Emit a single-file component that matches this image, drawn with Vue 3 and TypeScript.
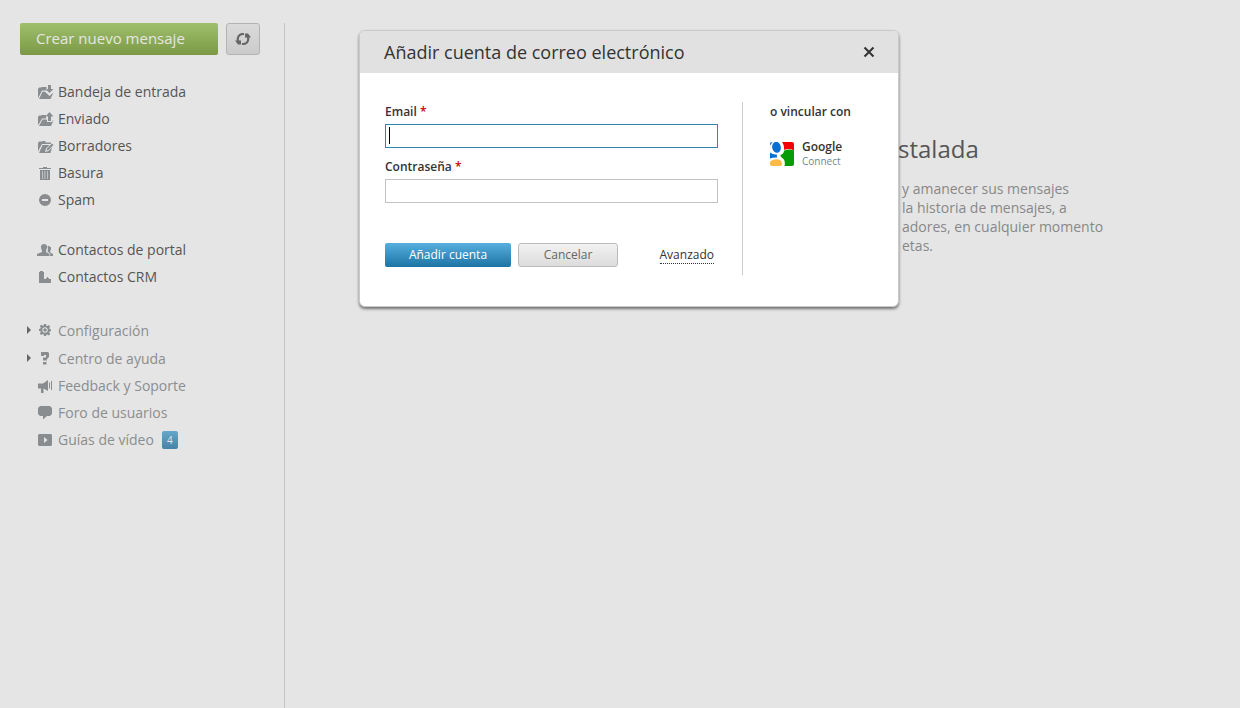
<script setup lang="ts">
import { ref } from 'vue'

interface NavItem {
  label: string
  icon: string
  expandable?: boolean
  badge?: number
}

const folders: NavItem[] = [
  { label: 'Bandeja de entrada', icon: 'inbox' },
  { label: 'Enviado', icon: 'sent' },
  { label: 'Borradores', icon: 'drafts' },
  { label: 'Basura', icon: 'trash' },
  { label: 'Spam', icon: 'spam' },
]
const contacts: NavItem[] = [
  { label: 'Contactos de portal', icon: 'people' },
  { label: 'Contactos CRM', icon: 'crm' },
]
const support: NavItem[] = [
  { label: 'Configuración', icon: 'gear', expandable: true },
  { label: 'Centro de ayuda', icon: 'help', expandable: true },
  { label: 'Feedback y Soporte', icon: 'feedback' },
  { label: 'Foro de usuarios', icon: 'forum' },
  { label: 'Guías de vídeo', icon: 'video', badge: 4 },
]
const groups = [
  { id: 'folders', name: 'Carpetas', items: folders },
  { id: 'contacts', name: 'Contactos', items: contacts },
  { id: 'support', name: 'Ayuda', items: support },
]

const icons: Record<string, string> = {
  inbox: 'M0 4L1 2.500h2L4 2h4.500v3.500H4L1.500 10.500 0 13zM10 0h3v4h2.500L11.500 8 7.500 4H10zM1 14L4.500 6.800H7L11.500 11 15.500 7.500 12.500 14z',
  sent: 'M0 5L1 3.500h2L4 3h4v3.500H4L1.500 11 0 13zM10 9V4.500H7.500l4-4.500 4 4.500H13V9zM1 14l3.500-6.500H9V10h5.500V8.500h1L13 14z',
  drafts: 'M0 4L1 2.500h3L5 2h2l1 1.500h5V5H4L1.500 9.500 0 12.500zM1 14l3.500-8h7L8 9.500 7 13l3.500-1L14 8.500 12.500 14zM8.500 11.500l.5-2L14 4.500 15.500 6 10.500 11z',
  trash: 'M5 1h4v1h4v1H1V2h4zM2 4h10v10H2zM4 5v8h.6V5zm2.600 0v8h.6V5zM9.200 5v8h.6V5z',
  spam: 'M7 1a6 6 0 1 0 0 12A6 6 0 0 0 7 1zM4 6h6v2H4z',
  people: 'M3 3Q3.500 1 6 1t3 2q.3 2-.7 3.500L8 8v1l3.500 2v2H-1v-2L4 9V8L3.500 6.500Q2.700 5 3 3zM9.500 3q2.500-.5 3.500 1.500.3 2-.8 3.500v1.500L15 11v2h-2.800v-2.300L9.500 8.500q1-2 0-5.500z',
  crm: 'M1 2h1V1h3v1h1v7h2V8h1V7h1v1h1v1h2v4H1z',
  gear: 'M6 1h2l.4 1.700 1 .4 1.500-1L12.200 3.400l-1 1.600.4 1 1.400.5v1.600l-1.400.5-.4 1 1 1.500-1.300 1.300-1.500-1-1 .4L8 13H6l-.4-1.700-1-.4-1.500 1-1.300-1.300 1-1.500-.4-1L1 8V6l1.400-.4.4-1-1-1.500 1.300-1.300 1.500 1 1-.4zM7 4.300a2.700 2.700 0 1 0 0 5.400 2.700 2.700 0 0 0 0-5.400zM7 5.200a1.800 1.800 0 1 1 0 3.600 1.800 1.800 0 0 1 0-3.600z',
  help: 'M3 1h7l1 1v4L9 8v1.500H5V6.500h3V4H6v1H3zM5 11h3.500v2.500H5z',
  feedback: 'M0 4.500h5L10 1v11L5.500 9.500V14H3V9.500H0zM11 3.500h1v6h-1zM13 2h1v9h-1z',
  forum: 'M2 0h10l2 2v6l-2 2H9l-4 3.500V10H2L0 8V2z',
  video: 'M1 1h12l1 1v10l-1 1H1l-1-1V2zM6 4v6l3.500-3z',
}

const dialogOpen = ref(true)
const email = ref('')
const password = ref('')
</script>

<template>
  <div class="app">
    <aside class="sidebar">
      <div class="actions">
        <button type="button" class="create">Crear nuevo mensaje</button>
        <button type="button" class="refresh" aria-label="Actualizar">
          <svg width="16" height="14" viewBox="0 0 16 14" aria-hidden="true">
            <path d="M4.500 10.800A5 5 0 0 1 8 2h1M11.500 3.200A5 5 0 0 1 8 12H7" />
            <path class="tip" d="M0 8.500h6V12.500H3zM16 5.500h-6V1.500h3z" />
          </svg>
        </button>
      </div>
      <nav v-for="group in groups" :key="group.id" :class="group.id" :aria-label="group.name">
        <a
          v-for="item in group.items"
          :key="item.label"
          href="#"
          class="item"
          :class="{ expandable: item.expandable }"
        >
          <svg class="icon" width="17" height="14" viewBox="-1 0 17 14" aria-hidden="true">
            <path fill-rule="evenodd" :d="icons[item.icon]" />
          </svg>
          <span>{{ item.label }}</span>
          <span v-if="item.badge" class="badge">{{ item.badge }}</span>
        </a>
      </nav>
    </aside>

    <main class="content">
      <h1>stalada</h1>
      <p>y amanecer sus mensajes<br />la historia de mensajes, a<br />adores, en cualquier momento<br />etas.</p>
    </main>

    <div v-if="dialogOpen" class="overlay">
      <section class="dialog" role="dialog" aria-labelledby="dialog-title">
        <header>
          <h2 id="dialog-title">Añadir cuenta de correo electrónico</h2>
          <button type="button" class="close" aria-label="Cerrar" @click="dialogOpen = false">
            <svg width="12" height="12" viewBox="0 0 12 12" aria-hidden="true">
              <path d="M1.500 1.500l9 9M10.500 1.500l-9 9" />
            </svg>
          </button>
        </header>
        <div class="body">
          <form @submit.prevent>
            <label for="email">Email <span class="required">*</span></label>
            <div class="field">
              <input id="email" v-model="email" type="text" class="active" />
              <span v-if="!email" class="caret"></span>
            </div>
            <label for="password">Contraseña <span class="required">*</span></label>
            <div class="field">
              <input id="password" v-model="password" type="password" />
            </div>
            <div class="buttons">
              <button type="submit" class="primary">Añadir cuenta</button>
              <button type="button" class="secondary" @click="dialogOpen = false">Cancelar</button>
              <a href="#" class="advanced">Avanzado</a>
            </div>
          </form>
          <div class="link-with">
            <h3>o vincular con</h3>
            <a href="#" class="google">
              <svg width="24" height="24" viewBox="0 0 24 24" aria-hidden="true">
                <defs><clipPath id="tile"><rect width="24" height="24" rx="2" /></clipPath></defs>
                <g clip-path="url(#tile)">
                  <rect width="24" height="24" fill="#fff" />
                  <path d="M12 0h12v8.500Q19 6 14 8q.5-5-2-8z" fill="#f30008" />
                  <path d="M14 8.800q5-2.500 10-.3V24H14.500q1-4.500-1-7-3.500-2.500-3-4Q14 11.500 14 8.800z" fill="#079b08" />
                  <ellipse cx="6.500" cy="5.300" rx="4.300" ry="5.500" transform="rotate(-12 6.500 5.300)" fill="#0b6fd0" />
                  <path d="M0 10.500q3 2.500 7 2-.5 1.700.2 3Q4 15 0 16.500z" fill="#0b6fd0" />
                  <path d="M0 0h2.500L0 3.500z" fill="#0b6fd0" />
                  <path d="M0 20q2-2.700 6.500-2.700T12 21q0 2-1 3H0z" fill="#fdbb45" />
                </g>
              </svg>
              <span class="google-text"><strong>Google</strong><span>Connect</span></span>
            </a>
          </div>
        </div>
      </section>
    </div>
  </div>
</template>

<style>
body {
  margin: 0;
  background: #e5e5e5;
}
</style>

<style scoped>
.app {
  display: flex;
  box-sizing: border-box;
  min-height: 100vh;
  padding-top: 23px;
  font-family: "Open Sans", sans-serif;
  font-size: 14px;
  color: #555;
}
button,
input {
  box-sizing: border-box;
  margin: 0;
  font-family: inherit;
}
h1,
h2,
h3,
p {
  margin: 0;
}
.sidebar {
  box-sizing: border-box;
  flex: 0 0 285px;
  padding: 0 24px 0 20px;
  border-right: 1px solid #c3c3c3;
}
.actions {
  display: flex;
  gap: 8px;
  margin-bottom: 23px;
}
.create {
  flex: 1;
  height: 32px;
  padding: 0 16px 2px;
  border: 0;
  border-radius: 2px;
  background: linear-gradient(#9fbf6c, #7b9945);
  color: #e5e5e5;
  font-size: 15px;
  text-align: left;
}
.refresh {
  display: flex;
  align-items: center;
  justify-content: center;
  width: 34px;
  height: 32px;
  padding: 0;
  border: 1px solid #b3b3b3;
  border-radius: 3px;
  background: linear-gradient(#dbdbdb, #cbcbcb);
}
.refresh path {
  fill: none;
  stroke: #666;
  stroke-width: 2;
}
.refresh .tip {
  fill: #666;
  stroke: none;
}
.item {
  display: flex;
  align-items: center;
  height: 27px;
  padding-left: 17px;
  color: #555;
  text-decoration: none;
}
.icon {
  margin-right: 4px;
  fill: #8a8d8f;
}
.contacts {
  margin-top: 23px;
}
.support {
  margin-top: 26px;
}
.support .item {
  color: #8b8d8f;
}
.support .expandable {
  height: 28px;
  padding-left: 7px;
}
.expandable::before {
  content: "";
  margin-right: 6px;
  border: 4px solid transparent;
  border-right: 0;
  border-left-color: #666;
}
.badge {
  width: 16px;
  height: 18px;
  margin-left: 8px;
  border-radius: 2px;
  background: linear-gradient(#64a6cd, #4684a6);
  color: #e5e5e5;
  font-size: 10px;
  line-height: 18px;
  text-align: center;
}
.content {
  flex: 1;
  padding: 108px 0 0 613px;
  white-space: nowrap;
}
h1 {
  font-size: 24px;
  font-weight: 400;
  line-height: 36px;
}
.content p {
  margin-top: 12px;
  padding-left: 4px;
  color: #888;
  line-height: 19px;
}
.overlay {
  position: absolute;
  top: 30px;
  right: 0;
  left: 18px;
  display: flex;
  justify-content: center;
}
.dialog {
  box-sizing: border-box;
  width: 540px;
  overflow: hidden;
  border: 1px solid #c9c9c9;
  border-radius: 6px;
  background: #fff;
  box-shadow: 0 2px 3px rgba(0, 0, 0, 0.5);
  color: #333;
}
.dialog header {
  display: flex;
  align-items: center;
  justify-content: space-between;
  height: 42px;
  padding: 0 23px 0 24px;
  background: #e1e1e1;
}
h2 {
  font-size: 18px;
  font-weight: 400;
}
.close {
  display: flex;
  padding: 0;
  border: 0;
  background: none;
}
.close path {
  fill: none;
  stroke: #333;
  stroke-width: 2;
}
.body {
  display: flex;
  padding: 29px 24px 31px 25px;
}
form {
  flex: 1;
  padding-right: 24px;
  border-right: 1px solid #ccc;
}
label {
  display: block;
  font-size: 12px;
  font-weight: 600;
  line-height: 20px;
}
.required {
  color: #c00;
}
.field {
  position: relative;
  margin: 2px 0 9px;
}
input {
  display: block;
  width: 100%;
  height: 24px;
  padding: 0 4px;
  border: 1px solid #c3c3c3;
  outline: 0;
  font-size: 12px;
}
input.active {
  border-color: #3286ab;
  caret-color: transparent;
}
.caret {
  position: absolute;
  top: 3px;
  left: 4px;
  width: 1px;
  height: 17px;
  background: #000;
}
.buttons {
  display: flex;
  align-items: center;
  margin: 40px 0 8px;
}
.buttons button {
  height: 24px;
  padding: 0 8px 1px;
  border: 0;
  border-radius: 2px;
  font-size: 12px;
  white-space: nowrap;
}
.buttons .primary {
  width: 126px;
  background: linear-gradient(#57afe0, #1b74a4);
  color: #fff;
}
.buttons .secondary {
  width: 100px;
  margin-left: 7px;
  border: 1px solid #bbb;
  border-radius: 3px;
  background: linear-gradient(#f2f2f2, #dcdcdc);
  color: #666;
}
.advanced {
  margin: 0 4px 0 auto;
  border-bottom: 1px dotted #333;
  color: #333;
  font-size: 12px;
  line-height: 16px;
  text-decoration: none;
}
.link-with {
  width: 104px;
  padding-left: 27px;
}
h3 {
  font-size: 12px;
  font-weight: 600;
  line-height: 20px;
}
.google {
  display: flex;
  align-items: center;
  gap: 8px;
  margin-top: 18px;
  color: #777;
  text-decoration: none;
}
.google-text {
  display: flex;
  flex-direction: column;
  font-size: 10px;
  line-height: 14px;
}
.google strong {
  color: #333;
  font-size: 12px;
  font-weight: 600;
}
.google-text span {
  color: #678a9b;
}
</style>
